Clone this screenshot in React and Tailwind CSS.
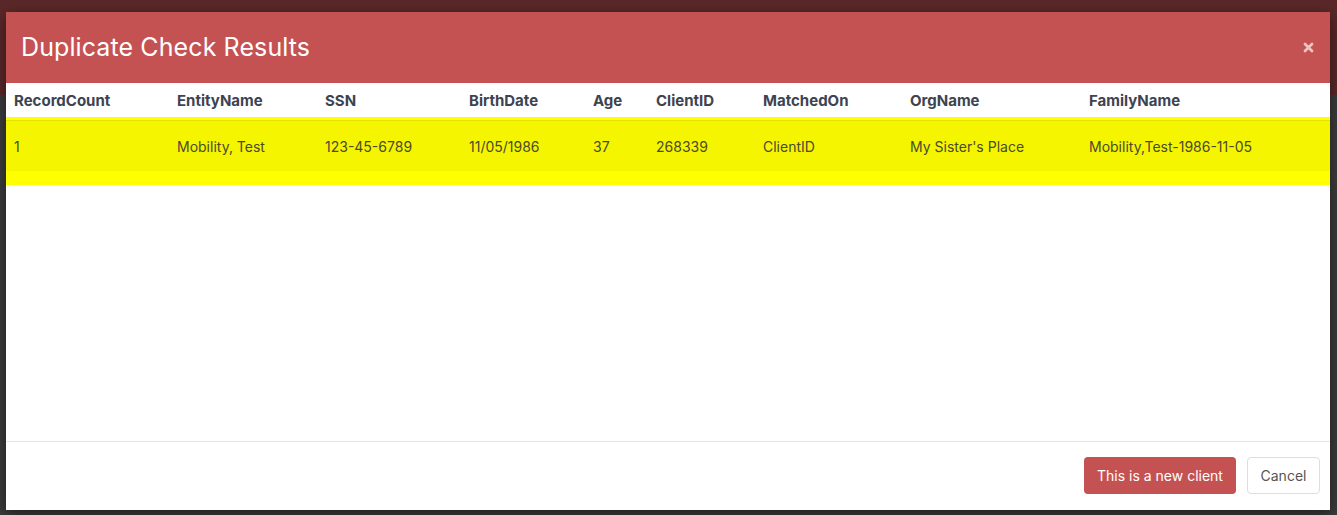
const columns = [
  { key: "recordCount", label: "RecordCount", width: "w-[163px]" },
  { key: "entityName", label: "EntityName", width: "w-[148px]" },
  { key: "ssn", label: "SSN", width: "w-[144px]" },
  { key: "birthDate", label: "BirthDate", width: "w-[124px]" },
  { key: "age", label: "Age", width: "w-[63px]" },
  { key: "clientId", label: "ClientID", width: "w-[107px]" },
  { key: "matchedOn", label: "MatchedOn", width: "w-[147px]" },
  { key: "orgName", label: "OrgName", width: "w-[179px]" },
  { key: "familyName", label: "FamilyName", width: "flex-1" },
];

const rows = [
  {
    recordCount: "1",
    entityName: "Mobility, Test",
    ssn: "123-45-6789",
    birthDate: "11/05/1986",
    age: "37",
    clientId: "268339",
    matchedOn: "ClientID",
    orgName: "My Sister's Place",
    familyName: "Mobility,Test-1986-11-05",
  },
];

const CloseIcon = () => (
  <svg width="11" height="11" viewBox="0 0 11 11" aria-hidden="true">
    <path
      d="M2 2 L9 9 M9 2 L2 9"
      stroke="currentColor"
      strokeWidth="2.8"
      strokeLinecap="round"
    />
  </svg>
);

export default function App() {
  return (
    <div
      className="relative h-[515px] w-[1337px] overflow-hidden bg-[linear-gradient(180deg,#5b2829_0px,#5b2829_95px,#3c3c3c_95px,#3c3c3c_100%)]"
      style={{ fontFamily: "Inter, 'Open Sans', sans-serif" }}
    >
      <div className="ml-[6px] mt-[12px] flex h-[498px] w-[1324px] flex-col bg-white shadow-[0_4px_14px_rgba(0,0,0,0.5)]">
        {/* header */}
        <div className="flex h-[71px] shrink-0 items-center justify-between bg-[#c55252] pl-[15px] pr-[16px]">
          <h2 className="text-[25px] font-normal tracking-[0.1px] text-white">
            Duplicate Check Results
          </h2>
          <button type="button" className="text-[#f0c4c4]">
            <CloseIcon />
          </button>
        </div>

        {/* table */}
        <div className="flex h-[34px] shrink-0 items-center pl-[8px] pt-[2px] text-[15px] font-bold text-[#3d4350]">
          {columns.map((col) => (
            <div key={col.key} className={col.width}>
              {col.label}
            </div>
          ))}
        </div>
        {rows.map((row) => (
          <div key={row.recordCount} className="shrink-0 bg-[#ffff00] pb-[14px] pt-[3px]">
            <div className="h-[1px] bg-[#e3e300]" />
            <div className="flex h-[50px] items-center bg-[#f5f500] pl-[8px] text-[14px] text-[#4a4a2e]">
              {columns.map((col) => (
                <div key={col.key} className={col.width}>
                  {row[col.key]}
                </div>
              ))}
            </div>
          </div>
        ))}
        <div className="flex-1" />

        {/* footer */}
        <div className="flex h-[69px] shrink-0 items-center justify-end gap-[11px] border-t border-[#e5e5e5] pb-[2px] pr-[10px]">
          <button
            type="button"
            className="h-[37px] w-[152px] rounded-[4px] bg-[#c55252] text-[14px] text-white"
          >
            This is a new client
          </button>
          <button
            type="button"
            className="h-[37px] w-[73px] rounded-[4px] border border-[#dedede] bg-white text-[14px] text-[#555]"
          >
            Cancel
          </button>
        </div>
      </div>
    </div>
  );
}
